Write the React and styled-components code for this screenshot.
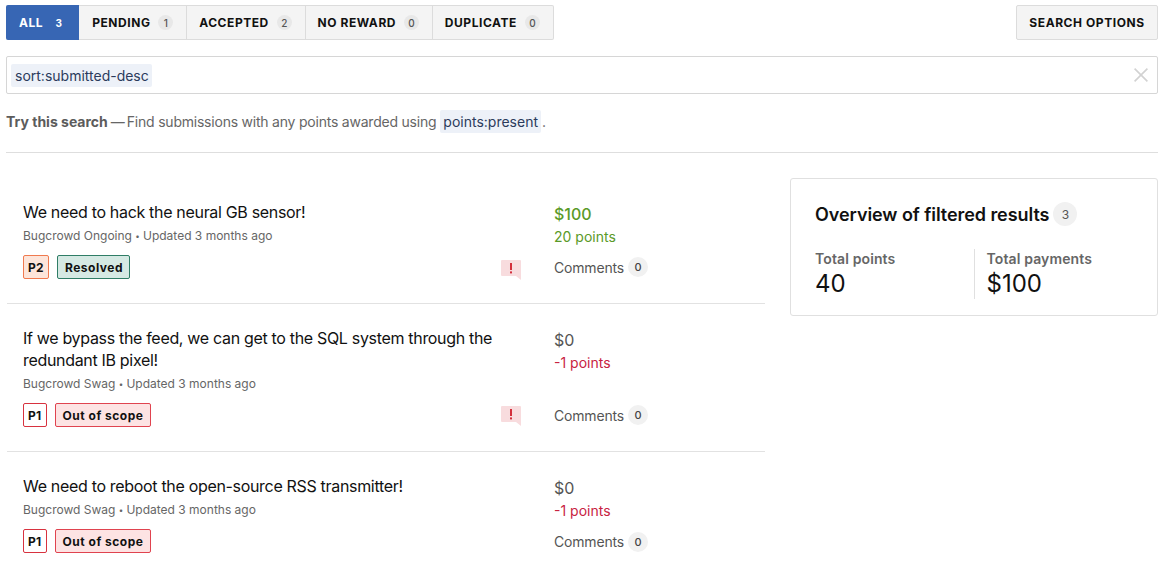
import React from 'react';
import styled, { createGlobalStyle } from 'styled-components';

const Global = createGlobalStyle`
  html, body { margin: 0; padding: 0; background: #fff; }
  body { font-family: Inter, "Liberation Sans", sans-serif; color: #111; overflow: hidden; }
  * { box-sizing: border-box; }
`;
const Page = styled.div`
  width: 1161px; height: 566px; padding: 5px 3px 0 6px; overflow: hidden;
`;
const Toolbar = styled.div`
  display: flex; justify-content: space-between; height: 35px;
`;
const Tabs = styled.div`
  display: flex; border: 1px solid #dcdcdc; border-left: 0; border-radius: 2px; background: #f4f4f4;
`;
const Tab = styled.div`
  display: flex; align-items: center; gap: 8px;
  padding: 0 ${p => p.$active ? '13px' : '12.75px'} 0 ${p => p.$active ? '13px' : '12px'};
  margin: ${p => p.$active ? '-1px 0' : '0'};
  background: ${p => p.$active ? '#3766b4' : 'transparent'};
  color: ${p => p.$active ? '#fff' : '#111'};
  border-left: ${p => p.$active ? '0' : p.$first ? '1px solid transparent' : '1px solid #dcdcdc'};
  border-radius: ${p => p.$active ? '2px 0 0 2px' : '0'};
  font-size: 12px; font-weight: 700; letter-spacing: .55px;
`;
const TabCount = styled.span`
  width: 15px; height: 15px; border-radius: 50%; font-size: 10px; font-weight: ${p => p.$active ? 700 : 500}; letter-spacing: 0;
  display: flex; align-items: center; justify-content: center;
  background: ${p => p.$active ? 'transparent' : '#e8e8e8'};
  color: ${p => p.$active ? '#fff' : '#555'};
`;
const OptionsButton = styled.div`
  display: flex; align-items: center; width: 142px; justify-content: center;
  border: 1px solid #dcdcdc; border-radius: 2px; background: #f4f4f4;
  font-size: 12px; font-weight: 700; letter-spacing: .57px; color: #111;
`;
const SearchBox = styled.div`
  margin-top: 16px; height: 38px; border: 1px solid #d6d6d6; border-radius: 2px;
  display: flex; align-items: center; justify-content: space-between; padding: 0 9px 0 4px;
`;
const Token = styled.span`
  display: inline-block; background: #edf1f8; color: #2b3b5c; border-radius: 2px;
  font-size: 14px; line-height: 23px; padding: 0 3px 0 4px;
`;
const Hint = styled.div`
  margin-top: 15px; height: 24px; display: flex; align-items: center; font-size: 14px; color: #666;
`;
const HintStrong = styled.strong`
  font-weight: 700; color: #5c5c5c; margin-right: 3px;
`;
const HintDash = styled.span`
  margin-right: 2px;
`;
const HintText = styled.span`
  letter-spacing: -.22px;
`;
const HintToken = styled(Token)`
  margin: 0 1px 0 4px; padding: 0 3px;
`;
const Rule = styled.div`
  margin-top: 19px; height: 1px; background: #dedede;
`;
const Content = styled.div`
  display: flex; align-items: flex-start; margin-top: 25px;
`;
const List = styled.div`
  width: 758px; margin-left: 1px; flex: none;
`;
const Row = styled.div`
  display: grid; grid-template-columns: 531px 1fr; padding: 23px 0 24.8px 16px;
  border-bottom: ${p => p.$last ? '0' : '1px solid #e2e2e2'};
`;
const Main = styled.div`
  display: flex; flex-direction: column;
`;
const Title = styled.div`
  font-size: 16px; line-height: 21.6px; letter-spacing: -.32px; color: #111; width: 490px; margin-top: 1px;
`;
const Meta = styled.div`
  font-size: 12px; line-height: 16px; color: #666; margin-top: 4px;
`;
const MetaSep = styled.span`
  display: inline-block; width: 11px; text-align: center; font-size: 8px; vertical-align: 1px;
`;
const FooterRow = styled.div`
  display: flex; align-items: center; justify-content: space-between; margin-top: 11px; padding-right: 33px; height: 24px;
`;
const Badges = styled.div`
  display: flex; gap: 8px;
`;
const Badge = styled.span`
  height: 24px; display: flex; align-items: center; padding: ${p => p.$pad ? `1px ${p.$pad}px 0` : '1px 6.5px 0 7px'};
  border: 1px solid ${p => p.$border}; background: ${p => p.$bg}; border-radius: 2px;
  font-size: 12px; font-weight: 700; letter-spacing: ${p => p.$pad ? '.3px' : '.5px'}; color: #111;
`;
const Side = styled.div`
  display: flex; flex-direction: column; padding-top: 2px;
`;
const Amount = styled.div`
  font-size: 16px; line-height: 22px; font-weight: ${p => p.$strong ? 500 : 400}; color: ${p => p.$color};
`;
const Points = styled.div`
  font-size: 14px; line-height: 18px; margin-top: 3px; color: ${p => p.$color};
`;
const Comments = styled.div`
  display: flex; align-items: center; gap: 4px; height: 24px; font-size: 14px; letter-spacing: -.18px; color: #555;
  margin-top: auto; margin-bottom: -.8px;
`;
const CommentCount = styled.span`
  width: 20px; height: 20px; border-radius: 50%; background: #f1f1f1; color: #444;
  display: flex; align-items: center; justify-content: center; font-size: 11px; font-weight: 500; letter-spacing: 0;
`;
const Panel = styled.div`
  width: 368px; height: 138px; margin-left: 25px; border: 1px solid #e0e0e0; border-radius: 3px; padding: 23px 24px 0;
`;
const PanelTitle = styled.div`
  display: flex; align-items: center; gap: 4px; height: 24px; font-size: 18px; font-weight: 600; letter-spacing: -.06px; color: #111;
`;
const PanelCount = styled.span`
  width: 24px; height: 24px; border-radius: 50%; background: #f1f1f1; color: #555;
  display: flex; align-items: center; justify-content: center; font-size: 12px; font-weight: 400; letter-spacing: 0;
`;
const Stats = styled.div`
  display: grid; grid-template-columns: 159px 1fr; margin-top: 23px; height: 50px;
`;
const Stat = styled.div`
  padding-left: ${p => p.$divided ? '11.5px' : '0'};
  border-left: ${p => p.$divided ? '1px solid #e0e0e0' : '0'};
`;
const StatLabel = styled.div`
  font-size: 14px; line-height: 20px; font-weight: 600; letter-spacing: .12px; color: #666;
`;
const StatValue = styled.div`
  font-size: 24px; line-height: 29px; font-weight: 400; color: #111;
`;
const FlagMark = styled.svg`
  margin-top: ${p => p.$drop}px; flex: none;
`;

const CloseIcon = () => (
  <svg width="14" height="14" viewBox="0 0 14 14" fill="none" stroke="#d2d2d2" strokeWidth="1.6"><path d="M.6.6l12.8 12.8M13.4.6L.6 13.4" /></svg>
);
const Flag = ({ drop }) => (
  <FlagMark $drop={drop} width="20" height="20" viewBox="0 0 20 20">
    <path d="M1 0h18a1 1 0 0 1 1 1v19l-5-4H1a1 1 0 0 1-1-1V1a1 1 0 0 1 1-1z" fill="#f8dcde" />
    <rect x="9" y="3" width="2" height="7" fill="#d32f3c" />
    <rect x="9" y="11.4" width="2" height="2" fill="#d32f3c" />
  </FlagMark>
);

const tabs = [['ALL', 3], ['PENDING', 1], ['ACCEPTED', 2], ['NO REWARD', 0], ['DUPLICATE', 0]];
const RED = ['#e0434f', '#fde3e3'];
const rows = [
  { title: 'We need to hack the neural GB sensor!', meta: 'Bugcrowd Ongoing', p: 'P2', pc: ['#f07a4f', '#fde5da'], status: 'Resolved', sc: ['#2f7d66', '#d5e9e3'], amount: '$100', pts: '20 points', col: '#5a9a28', strong: true, flag: 6 },
  { title: 'If we bypass the feed, we can get to the SQL system through the redundant IB pixel!', meta: 'Bugcrowd Swag', p: 'P1', pc: ['#d8323f', '#fff'], status: 'Out of scope', sc: RED, amount: '$0', pts: '-1 points', col: '#c8233f', flag: 2 },
  { title: 'We need to reboot the open-source RSS transmitter!', meta: 'Bugcrowd Swag', p: 'P1', pc: ['#d8323f', '#fff'], status: 'Out of scope', sc: RED, amount: '$0', pts: '-1 points', col: '#c8233f', last: true },
];

export default function App() {
  return (
    <Page>
      <Global />
      <Toolbar>
        <Tabs>
          {tabs.map(([label, n], i) => (
            <Tab key={label} $active={i === 0} $first={i === 1}>
              {label}<TabCount $active={i === 0}>{n}</TabCount>
            </Tab>
          ))}
        </Tabs>
        <OptionsButton>SEARCH OPTIONS</OptionsButton>
      </Toolbar>
      <SearchBox>
        <Token>sort:submitted-desc</Token>
        <CloseIcon />
      </SearchBox>
      <Hint>
        <HintStrong>Try this search</HintStrong>
        <HintDash>—</HintDash>
        <HintText>Find submissions with any points awarded using</HintText>
        <HintToken>points:present</HintToken>.
      </Hint>
      <Rule />
      <Content>
        <List>
          {rows.map(r => (
            <Row key={r.title} $last={r.last}>
              <Main>
                <Title>{r.title}</Title>
                <Meta>{r.meta}<MetaSep>•</MetaSep>Updated 3 months ago</Meta>
                <FooterRow>
                  <Badges>
                    <Badge $border={r.pc[0]} $bg={r.pc[1]} $pad={4}>{r.p}</Badge>
                    <Badge $border={r.sc[0]} $bg={r.sc[1]}>{r.status}</Badge>
                  </Badges>
                  {r.flag && <Flag drop={r.flag} />}
                </FooterRow>
              </Main>
              <Side>
                <Amount $color={r.strong ? r.col : '#555'} $strong={r.strong}>{r.amount}</Amount>
                <Points $color={r.col}>{r.pts}</Points>
                <Comments>Comments <CommentCount>0</CommentCount></Comments>
              </Side>
            </Row>
          ))}
        </List>
        <Panel>
          <PanelTitle>Overview of filtered results <PanelCount>3</PanelCount></PanelTitle>
          <Stats>
            <Stat><StatLabel>Total points</StatLabel><StatValue>40</StatValue></Stat>
            <Stat $divided><StatLabel>Total payments</StatLabel><StatValue>$100</StatValue></Stat>
          </Stats>
        </Panel>
      </Content>
    </Page>
  );
}
